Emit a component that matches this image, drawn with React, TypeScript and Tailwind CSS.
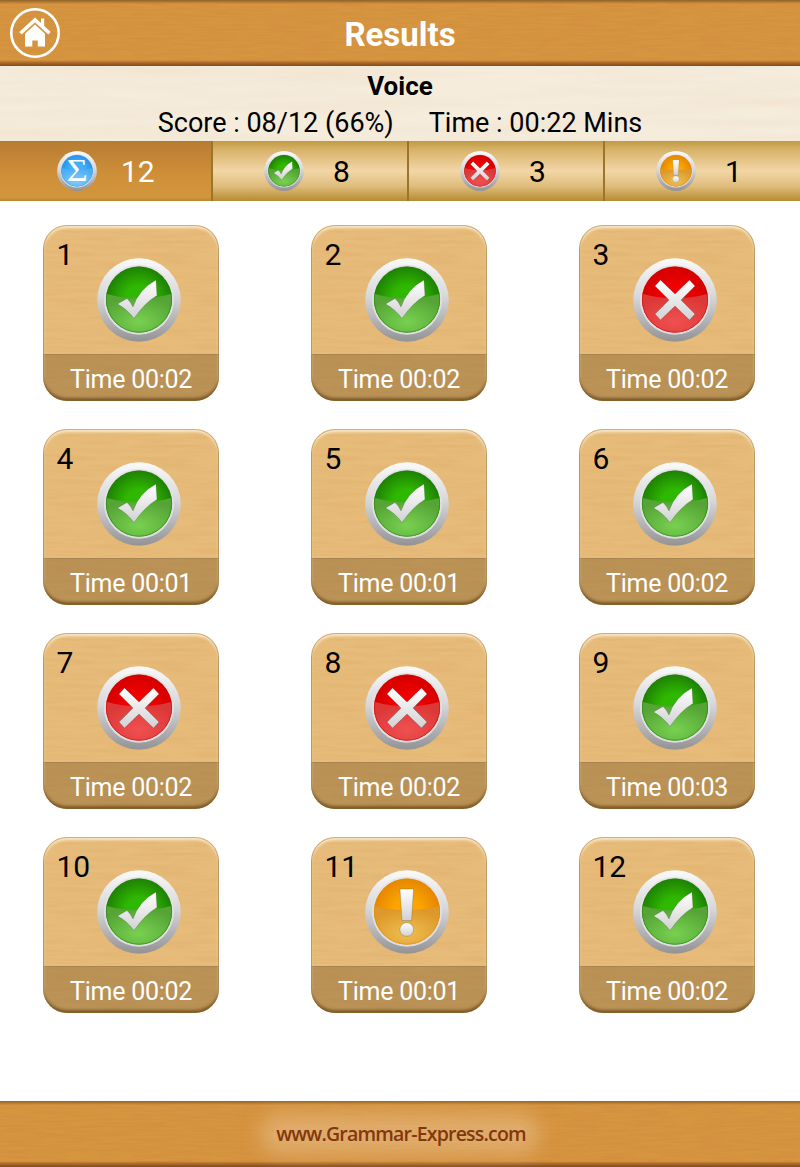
import { useId } from "react";

type Status = "correct" | "wrong" | "skipped" | "total";

interface Answer {
  no: number;
  status: Status;
  time: string;
}

const answers: Answer[] = [
  { no: 1, status: "correct", time: "00:02" },
  { no: 2, status: "correct", time: "00:02" },
  { no: 3, status: "wrong", time: "00:02" },
  { no: 4, status: "correct", time: "00:01" },
  { no: 5, status: "correct", time: "00:01" },
  { no: 6, status: "correct", time: "00:02" },
  { no: 7, status: "wrong", time: "00:02" },
  { no: 8, status: "wrong", time: "00:02" },
  { no: 9, status: "correct", time: "00:03" },
  { no: 10, status: "correct", time: "00:02" },
  { no: 11, status: "skipped", time: "00:01" },
  { no: 12, status: "correct", time: "00:02" },
];

const colors = {
  correct: { center: "#2fb800", edge: "#1d7d05", low: "#78d150", lowEdge: "#55a435" },
  wrong: { center: "#f00000", edge: "#d20000", low: "#f05050", lowEdge: "#dc3838" },
  skipped: { center: "#faa500", edge: "#e58400", low: "#efbd50", lowEdge: "#dc9828" },
  total: { center: "#45b0fa", edge: "#2593ec", low: "#7dcbff", lowEdge: "#4eaef5" },
};

function Grain({ freq, opacity, seed = 2 }: { freq: string; opacity: number; seed?: number }) {
  const id = useId();
  return (
    <svg className="absolute inset-0 w-full h-full pointer-events-none" aria-hidden="true">
      <filter id={id} x="0" y="0" width="100%" height="100%">
        <feTurbulence type="fractalNoise" baseFrequency={freq} numOctaves="3" seed={seed} />
        <feColorMatrix values="0 0 0 0 .62  0 0 0 0 .25  0 0 0 0 .05  2.4 0 0 0 -.9" />
      </filter>
      <rect width="100%" height="100%" filter={`url(#${id})`} opacity={opacity} />
    </svg>
  );
}

function StatusIcon({ status, className }: { status: Status; className: string }) {
  const id = useId();
  const c = colors[status];
  return (
    <svg viewBox="0 0 84 84" className={className}>
      <defs>
        <linearGradient id={`${id}r`} x1="0" y1="0" x2="0" y2="1">
          <stop offset="0" stopColor="#fafafa" />
          <stop offset=".45" stopColor="#d8d8da" />
          <stop offset="1" stopColor="#939395" />
        </linearGradient>
        <linearGradient id={`${id}i`} x1="0" y1="0" x2="0" y2="1">
          <stop offset="0" stopColor="#e4e4e6" />
          <stop offset="1" stopColor="#dedee0" />
        </linearGradient>
        <radialGradient id={`${id}t`} cx=".5" cy=".5" r=".52">
          <stop offset="0" stopColor={c.center} />
          <stop offset=".4" stopColor={c.center} />
          <stop offset="1" stopColor={c.edge} />
        </radialGradient>
        <radialGradient id={`${id}b`} cx=".5" cy=".6" r=".5">
          <stop offset="0" stopColor={c.low} />
          <stop offset="1" stopColor={c.lowEdge} />
        </radialGradient>
        <linearGradient id={`${id}g`} x1="0" y1="0" x2="0" y2="1">
          <stop offset="0" stopColor="#ffffff" />
          <stop offset="1" stopColor="#d2d2d4" />
        </linearGradient>
        <clipPath id={`${id}c`}>
          <circle cx="42" cy="41.5" r="33" />
        </clipPath>
      </defs>
      <circle cx="42" cy="42" r="41.8" fill={`url(#${id}r)`} />
      <circle cx="42" cy="41.7" r="35" fill={`url(#${id}i)`} />
      <circle cx="42" cy="41.5" r="33" fill={`url(#${id}t)`} />
      <path
        d="M0 33 Q42 48 84 33 V84 H0Z"
        fill={`url(#${id}b)`}
        clipPath={`url(#${id}c)`}
      />
      <circle cx="42" cy="41.5" r="32.7" fill="none" stroke={c.edge} strokeOpacity=".45" />
      <g fill={`url(#${id}g)`} stroke="#222" strokeOpacity=".25" strokeWidth=".8">
        {status === "correct" && (
          <path d="M20.500 46 L30 40.500 Q33.500 43.500 36 49 Q42 31 59 22 L60 37.500 Q48 44.500 37 60.500 Q30 51 20.500 46Z" />
        )}
        {status === "wrong" && (
          <path d="M27.500 22 L42 36 L56.500 22 L62 28 L48 42 L62 56 L56.500 62 L42 48 L27.500 62 L22 56 L36 42 L22 28Z" />
        )}
        {status === "skipped" && (
          <>
            <path d="M35 19 H48.500 L46.500 50.500 H37Z" />
            <circle cx="41.700" cy="59.500" r="6.800" />
          </>
        )}
        {status === "total" && (
          <text
            x="20.500"
            y="63.500"
            textLength="44"
            lengthAdjust="spacingAndGlyphs"
            fontSize="66"
            fontFamily="'Liberation Serif', serif"
            fill="#fff"
            stroke="none"
          >
            Σ
          </text>
        )}
      </g>
    </svg>
  );
}

function HomeIcon() {
  return (
    <svg viewBox="0 0 50 50" className="w-[50px] h-[50px]" fill="#fff">
      <circle cx="25" cy="25" r="23.700" fill="none" stroke="#fff" strokeWidth="2.600" />
      <path d="M11.800 24 L25 12 L38.200 24" fill="none" stroke="#fff" strokeWidth="3.600" strokeLinecap="square" />
      <path d="M31 10.500 h3.200 v8.500 l-3.200-3z" />
      <path d="M25 16.500 L35 25.700 V38.500 H27.800 V32.500 H22.300 V38.500 H15 V25.700Z" />
    </svg>
  );
}

function AnswerCard({ answer }: { answer: Answer }) {
  return (
    <div className="relative h-44 w-44 overflow-hidden rounded-[24px] bg-[#e7bc7b]">
      <Grain freq="0.02 0.25" opacity={0.12} seed={4} />
      <div className="relative flex h-[129px] items-start">
        <span className="w-[54px] shrink-0 pl-[13.500px] pt-[11px] text-[30px] leading-[38px] text-black">
          {answer.no}
        </span>
        <StatusIcon status={answer.status} className="mt-[33px] h-[84px] w-[84px] shrink-0" />
      </div>
      <div className="relative h-[47px] border-t border-[#a98450] bg-[#7f5a26]/42 pl-[27px] text-[25px] leading-[49px] tracking-[-0.25px] whitespace-nowrap text-white">
        Time {answer.time}
      </div>
      <div className="pointer-events-none absolute inset-0 rounded-[24px] shadow-[inset_0_0_0_1px_rgba(142,105,45,0.45),inset_0_3px_3px_rgba(255,243,218,0.85),inset_0_-4px_3px_-1px_rgba(82,52,12,0.6)]" />
    </div>
  );
}

export default function App() {
  const tab =
    "flex items-center bg-[linear-gradient(to_bottom,#c19a43_0%,#d8b36a_15%,#f3d6a7_50%,#dfbd7d_75%,#b68b30_100%)]";
  const divider = "border-r-2 border-[#9c752c]";
  const num = "pt-0.5 text-[30px] leading-none";
  const bevel =
    "absolute inset-0 bg-[linear-gradient(to_bottom,#8f6228_0,transparent_4px,transparent_60px,#a8662a_63px,#7f4c1c_66px)]";

  return (
    <div className="flex h-[1167px] w-[800px] flex-col overflow-hidden bg-white font-['Roboto',sans-serif] text-black">
      {/* header */}
      <header className="relative h-[66px] bg-[#d6953f]">
        <Grain freq="0.03 0.45" opacity={0.45} />
        <div className={bevel} />
        <div className="relative grid h-full grid-cols-[60px_1fr_60px] items-center">
          <button className="-mt-[1px] ml-[10px] h-[50px] w-[50px]">
            <HomeIcon />
          </button>
          <h1 className="pt-[3px] text-center text-[33px] leading-none font-bold text-white">Results</h1>
        </div>
      </header>

      {/* score summary */}
      <section className="relative h-[75px] bg-[#f5ecdc] text-center">
        <Grain freq="0.005 0.065" opacity={0.05} seed={8} />
        <h2 className="relative pt-1 text-[26px] leading-8 font-bold">Voice</h2>
        <p className="relative flex justify-center gap-[35px] pt-[5px] text-[27px] leading-8 whitespace-nowrap">
          <span>Score : 08/12 (66%)</span>
          <span>Time : 00:22 Mins</span>
        </p>
      </section>

      {/* filter tabs */}
      <nav className="grid h-[60px] grid-cols-[213px_196px_196px_195px]">
        <div className={`${divider} flex items-center bg-[linear-gradient(to_bottom,#a9802c_0%,#b97e33_5%,#ce8f38_55%,#d2963c_94%,#b9852c_100%)] pl-[57px] text-white`}>
          <StatusIcon status="total" className="h-10 w-10" />
          <span className={`${num} ml-[24px]`}>12</span>
        </div>
        <div className={`${tab} ${divider} pl-[51px]`}>
          <StatusIcon status="correct" className="h-10 w-10" />
          <span className={`${num} ml-[29px]`}>8</span>
        </div>
        <div className={`${tab} ${divider} pl-[51px]`}>
          <StatusIcon status="wrong" className="h-10 w-10" />
          <span className={`${num} ml-[29px]`}>3</span>
        </div>
        <div className={`${tab} pl-[51px]`}>
          <StatusIcon status="skipped" className="h-10 w-10" />
          <span className={`${num} ml-[29px]`}>1</span>
        </div>
      </nav>

      {/* answers */}
      <main className="grid flex-1 grid-cols-[repeat(3,176px)] content-start gap-x-[92px] gap-y-7 pt-6 pl-[43px]">
        {answers.map((answer) => (
          <AnswerCard key={answer.no} answer={answer} />
        ))}
      </main>

      <footer className="relative h-[66px] overflow-hidden bg-[#d6953f]">
        <Grain freq="0.03 0.45" opacity={0.45} />
        <div className={bevel} />
        <div className="relative flex h-full items-center justify-center">
          <a className="rounded-full bg-[#e6bb86]/60 pr-0.5 pl-1 text-[19.500px] leading-[18px] font-semibold tracking-[-0.8px] text-[#82370d] shadow-[0_0_18px_12px_rgba(230,187,134,0.6)] font-['Open_Sans',sans-serif]">
            www.Grammar-Express.com
          </a>
        </div>
      </footer>
    </div>
  );
}
